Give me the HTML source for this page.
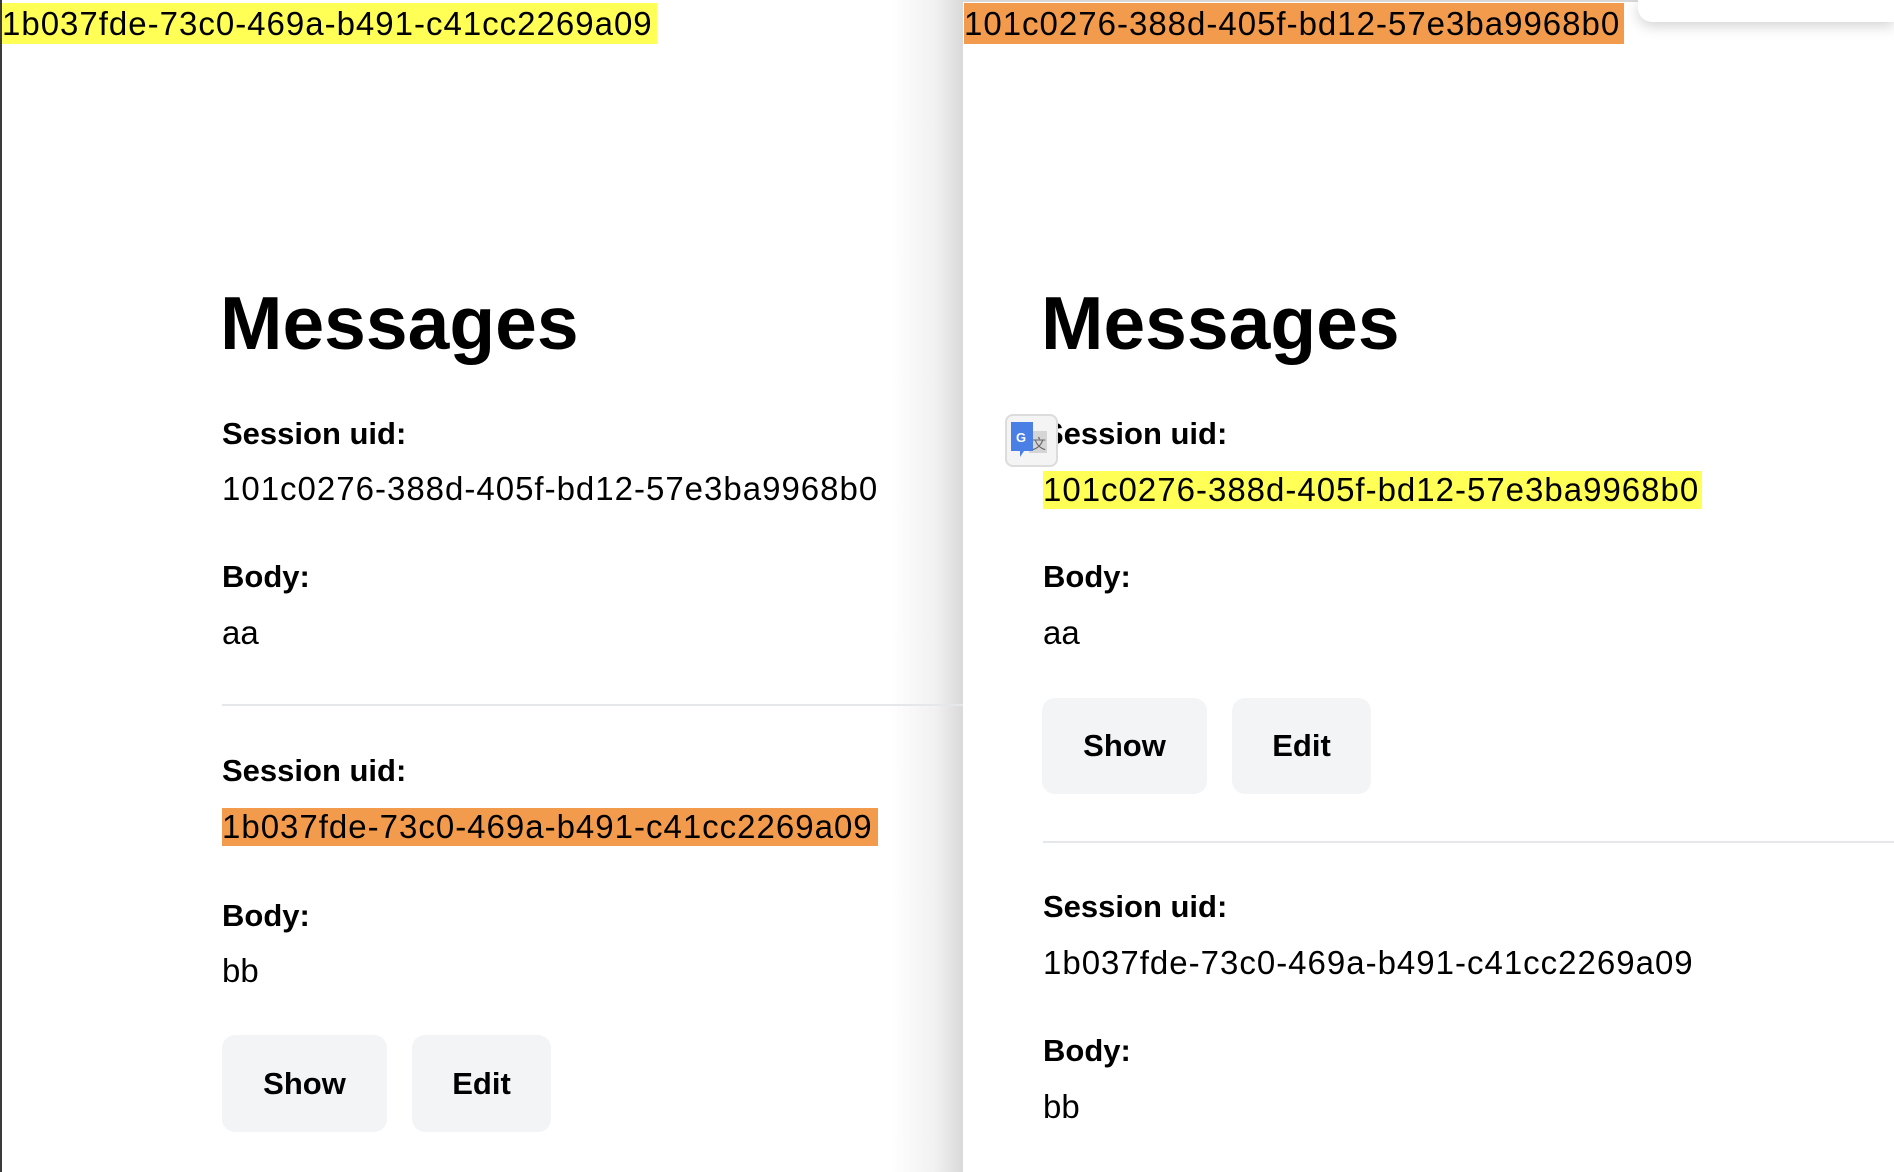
<!DOCTYPE html>
<html><head><meta charset="utf-8"><style>
*{margin:0;padding:0;box-sizing:border-box}
body{width:1894px;height:1172px;overflow:hidden;background:#fff;font-family:"Liberation Sans",Arial,sans-serif;color:#000;position:relative}
.a{position:absolute;white-space:nowrap}
.lbl{font-size:31px;font-weight:bold;line-height:44px;height:44px}
.val{font-size:33px;letter-spacing:1px;line-height:38px;height:38px}
.h1{font-size:75px;font-weight:bold;line-height:80px}
.btn{position:absolute;background:#f3f4f6;border-radius:13px;font-size:31px;font-weight:bold;display:flex;align-items:center;justify-content:center}
.hr{position:absolute;height:2px;background:#e5e7eb}
</style></head><body>
<div class="a" style="left:0;top:0;width:963px;height:1172px;background:linear-gradient(to right,#fff 0,#fff 890px,#f1f1f1 935px,#d9d9d9 963px)"></div>
<div class="a" style="left:0;top:0;width:2px;height:1172px;background:#3a3a3a"></div>
<div class="a" style="left:963px;top:0;width:931px;height:2px;background:#d8d8d8"></div>
<div class="a" style="left:1638px;top:0;width:256px;height:22px;background:#fff;border-bottom-left-radius:14px;box-shadow:0 4px 14px rgba(0,0,0,.18)"></div>

<div class="a val" style="left:2px;top:3px;height:41px;line-height:41px;background:#ffff55;width:655px">1b037fde-73c0-469a-b491-c41cc2269a09</div>
<div class="a val" style="left:964px;top:3px;height:41px;line-height:41px;background:#f29b4c;width:660px">101c0276-388d-405f-bd12-57e3ba9968b0</div>

<div class="a h1" style="left:220px;top:283px">Messages</div>
<div class="a lbl" style="left:222px;top:412px">Session uid:</div>
<div class="a val" style="left:222px;top:470px">101c0276-388d-405f-bd12-57e3ba9968b0</div>
<div class="a lbl" style="left:222px;top:555px">Body:</div>
<div class="a val" style="left:222px;top:614px;letter-spacing:0">aa</div>
<div class="hr" style="left:222px;top:704px;width:741px"></div>
<div class="a lbl" style="left:222px;top:749px">Session uid:</div>
<div class="a val" style="left:222px;top:808px;background:#f29b4c;width:656px">1b037fde-73c0-469a-b491-c41cc2269a09</div>
<div class="a lbl" style="left:222px;top:894px">Body:</div>
<div class="a val" style="left:222px;top:952px;letter-spacing:0">bb</div>
<div class="btn" style="left:222px;top:1035px;width:165px;height:97px">Show</div>
<div class="btn" style="left:412px;top:1035px;width:139px;height:97px">Edit</div>

<div class="a h1" style="left:1041px;top:283px">Messages</div>
<div class="a lbl" style="left:1043px;top:412px">Session uid:</div>
<div class="a" style="left:1005px;top:414px;width:53px;height:53px;background:#f4f4f4;border:2px solid #dcdcdc;border-radius:8px">
<svg width="49" height="49" viewBox="0 0 49 49"><rect x="22" y="15" width="18" height="22" fill="#d5d5d5"/><text x="25" y="33" font-size="14" fill="#666" font-family="Noto Sans CJK SC,sans-serif">文</text><path d="M4 6h22v29h-9l-4 6v-6H4z" fill="#4a7fe6"/><text x="9" y="26" font-size="13" font-weight="bold" fill="#fff" font-family="Liberation Sans,sans-serif">G</text></svg></div>
<div class="a val" style="left:1043px;top:471px;background:#ffff55;width:659px">101c0276-388d-405f-bd12-57e3ba9968b0</div>
<div class="a lbl" style="left:1043px;top:555px">Body:</div>
<div class="a val" style="left:1043px;top:614px;letter-spacing:0">aa</div>
<div class="btn" style="left:1042px;top:698px;width:165px;height:96px">Show</div>
<div class="btn" style="left:1232px;top:698px;width:139px;height:96px">Edit</div>
<div class="hr" style="left:1043px;top:841px;width:851px"></div>
<div class="a lbl" style="left:1043px;top:885px">Session uid:</div>
<div class="a val" style="left:1043px;top:944px">1b037fde-73c0-469a-b491-c41cc2269a09</div>
<div class="a lbl" style="left:1043px;top:1029px">Body:</div>
<div class="a val" style="left:1043px;top:1088px;letter-spacing:0">bb</div>
</body></html>
